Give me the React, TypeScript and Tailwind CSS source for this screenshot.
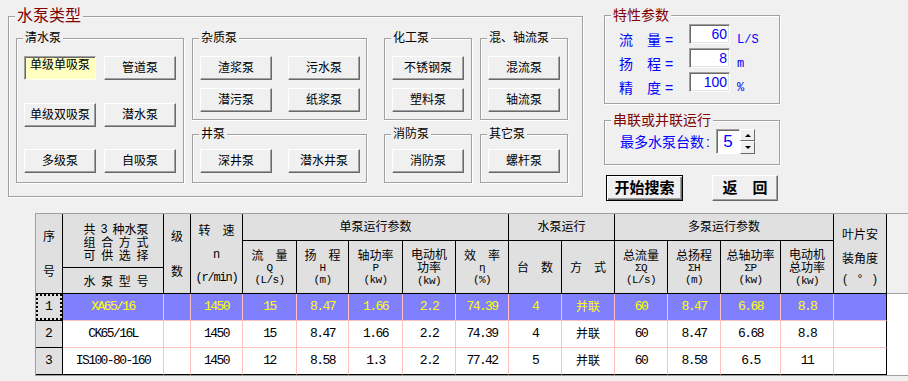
import React from "react";

const CJK = "font-['Liberation_Sans','Noto_Sans_CJK_SC',sans-serif]";
const MONO = "font-['Liberation_Mono','Noto_Sans_CJK_SC',monospace]";
const SUB = "-mt-[8px] ml-[6px] text-[12px] leading-[14px] text-black";
const RT = "-mt-[9px] ml-[6px] text-[14px] leading-[16px] text-[#800000]";

function Group({
  title,
  titleClass,
  className = "",
  children,
}: {
  title: string;
  titleClass: string;
  className?: string;
  children?: React.ReactNode;
}) {
  return (
    <div
      className={
        "border border-[#a0a0a0] shadow-[inset_1px_1px_0_#fff,1px_1px_0_#fff] " +
        className
      }
    >
      <div className={"w-fit whitespace-nowrap bg-[#f0f0f0] px-[2px] " + titleClass}>{title}</div>
      {children}
    </div>
  );
}

function Btn({ children, className = "" }: { children: React.ReactNode; className?: string }) {
  return (
    <div
      className={
        "flex h-[24px] w-[72px] items-center justify-center whitespace-nowrap border border-b-[#696969] border-l-white border-r-[#696969] border-t-white bg-[#f0f0f0] text-[12px] leading-[14px] text-black shadow-[inset_-1px_-1px_0_#a0a0a0] " +
        className
      }
    >
      {children}
    </div>
  );
}

function SelBtn({ children }: { children: React.ReactNode }) {
  return (
    <div className="flex h-[24px] w-[72px] justify-center whitespace-nowrap border border-b-white border-l-[#a0a0a0] border-r-white border-t-[#a0a0a0] bg-[#ffffc0] pt-[1px] text-[12px] leading-[14px] text-black shadow-[inset_1px_1px_0_#696969]">
      {children}
    </div>
  );
}

function ParamRow({ label, value, unit }: { label: string; value: string; unit: string }) {
  return (
    <div className="flex h-[20px] items-start">
      <div className="ml-[14px] mt-[8px] w-[70px] whitespace-nowrap text-[14px] leading-[16px] text-[#0000ff]">
        {label} =
      </div>
      <div className="flex h-[20px] w-[41px] items-center justify-end border border-b-white border-l-[#a0a0a0] border-r-white border-t-[#a0a0a0] bg-white pr-[2px] text-[14px] leading-[16px] text-[#0000ff] shadow-[inset_1px_1px_0_#696969,inset_-1px_-1px_0_#e3e3e3]">
        {value}
      </div>
      <div className={"ml-[7px] mt-[8px] text-[12px] leading-[16px] text-[#0000ff] " + MONO}>{unit}</div>
    </div>
  );
}

const HC =
  "flex flex-col items-center border-b border-r border-black bg-[#e0e0e0] text-[12px] text-black whitespace-nowrap";

function Tri({ label, sym, unit }: { label: string; sym: string; unit: string }) {
  return (
    <div className={HC + " row-span-2 justify-center pt-[1px]"}>
      <div className="leading-[12px]">{label}</div>
      <div className={"text-[11px] leading-[12px] tracking-[-0.6px] " + MONO}>{sym}</div>
      <div className={"text-[11px] leading-[12px] tracking-[-0.6px] " + MONO}>{unit}</div>
    </div>
  );
}

function Tri2({ a, b, unit }: { a: string; b: string; unit: string }) {
  return (
    <div className={HC + " row-span-2 justify-center pt-[1px]"}>
      <div className="leading-[13px]">{a}</div>
      <div className="leading-[13px]">{b}</div>
      <div className={"text-[11px] leading-[12px] tracking-[-0.6px] " + MONO}>{unit}</div>
    </div>
  );
}

const rows = [
  ["1", "XA65/16", "", "1450", "15", "8.47", "1.66", "2.2", "74.39", "4", "并联", "60", "8.47", "6.68", "8.8", ""],
  ["2", "CK65/16L", "", "1450", "15", "8.47", "1.66", "2.2", "74.39", "4", "并联", "60", "8.47", "6.68", "8.8", ""],
  ["3", "IS100-80-160", "", "1450", "12", "8.58", "1.3", "2.2", "77.42", "5", "并联", "60", "8.58", "6.5", "11", ""],
];

export default function App() {
  return (
    <div className={"flex h-[381px] w-[908px] flex-col overflow-hidden bg-[#f0f0f0] " + CJK}>
      {/* top section */}
      <div className="flex h-[213px] shrink-0 pl-[8px] pt-[16px]">
        <Group
          title="水泵类型"
          titleClass="-mt-[11px] ml-[6px] text-[16px] leading-[20px] text-[#800000]"
          className="h-[181px] w-[575px] shrink-0"
        >
          <div className="ml-[7px] mt-[12px] flex items-start">
            <Group title="清水泵" titleClass={SUB} className="h-[145px] w-[168px] shrink-0">
              <div className="ml-[7px] mt-[11px] grid grid-cols-[72px_72px] gap-x-[8px]">
                <SelBtn>单级单吸泵</SelBtn>
                <Btn>管道泵</Btn>
              </div>
              <div className="ml-[7px] mt-[23px] grid grid-cols-[72px_72px] gap-x-[8px]">
                <Btn>单级双吸泵</Btn>
                <Btn>潜水泵</Btn>
              </div>
              <div className="ml-[7px] mt-[22px] grid grid-cols-[72px_72px] gap-x-[8px]">
                <Btn>多级泵</Btn>
                <Btn>自吸泵</Btn>
              </div>
            </Group>
            <div className="ml-[8px] flex w-[175px] shrink-0 flex-col">
              <Group title="杂质泵" titleClass={SUB} className="h-[82px]">
                <div className="ml-[7px] mt-[11px] grid grid-cols-[72px_72px] gap-x-[16px] gap-y-[8px]">
                  <Btn>渣浆泵</Btn>
                  <Btn>污水泵</Btn>
                  <Btn>潜污泵</Btn>
                  <Btn>纸浆泵</Btn>
                </div>
              </Group>
              <Group title="井泵" titleClass={SUB} className="mt-[14px] h-[49px]">
                <div className="ml-[7px] mt-[8px] grid grid-cols-[72px_72px] gap-x-[16px]">
                  <Btn>深井泵</Btn>
                  <Btn>潜水井泵</Btn>
                </div>
              </Group>
            </div>
            <div className="ml-[17px] flex w-[88px] shrink-0 flex-col">
              <Group title="化工泵" titleClass={SUB} className="h-[82px]">
                <div className="ml-[7px] mt-[11px] flex flex-col gap-y-[8px]">
                  <Btn>不锈钢泵</Btn>
                  <Btn>塑料泵</Btn>
                </div>
              </Group>
              <Group title="消防泵" titleClass={SUB} className="mt-[14px] h-[49px]">
                <div className="ml-[7px] mt-[8px] flex">
                  <Btn>消防泵</Btn>
                </div>
              </Group>
            </div>
            <div className="ml-[8px] flex w-[88px] shrink-0 flex-col">
              <Group title="混、轴流泵" titleClass={SUB} className="h-[82px]">
                <div className="ml-[7px] mt-[11px] flex flex-col gap-y-[8px]">
                  <Btn>混流泵</Btn>
                  <Btn>轴流泵</Btn>
                </div>
              </Group>
              <Group title="其它泵" titleClass={SUB} className="mt-[14px] h-[49px]">
                <div className="ml-[7px] mt-[8px] flex">
                  <Btn>螺杆泵</Btn>
                </div>
              </Group>
            </div>
          </div>
        </Group>

        {/* right column */}
        <div className="-mt-[1px] ml-[21px] flex w-[176px] shrink-0 flex-col">
          <Group title="特性参数" titleClass={RT} className="h-[89px]">
            <div className="mt-[1px] flex flex-col gap-[4px]">
              <ParamRow label="流　量" value="60" unit="L/S" />
              <ParamRow label="扬　程" value="8" unit="m" />
              <ParamRow label="精　度" value="100" unit="%" />
            </div>
          </Group>
          <Group title="串联或并联运行" titleClass={RT} className="mt-[16px] h-[45px]">
            <div className="mt-[1px] flex h-[25px] items-center">
              <div className="ml-[15px] w-[96px] whitespace-nowrap text-[14px] leading-[16px] text-[#0000ff]">
                最多水泵台数<span className="ml-[2px]">:</span>
              </div>
              <div className="flex h-[25px] w-[24px] items-center justify-center border border-b-white border-l-[#a0a0a0] border-r-white border-t-[#a0a0a0] bg-white text-[17px] leading-[20px] text-[#0000ff] shadow-[inset_1px_1px_0_#696969]">
                5
              </div>
              <div className="flex w-[15px] flex-col">
                <div className="flex h-[12px] items-center justify-center border border-b-[#696969] border-l-white border-r-[#696969] border-t-white bg-[#f0f0f0]">
                  <div className="h-0 w-0 border-x-[3px] border-b-[3px] border-x-transparent border-b-black" />
                </div>
                <div className="flex h-[13px] items-center justify-center border border-b-[#696969] border-l-white border-r-[#696969] border-t-white bg-[#f0f0f0]">
                  <div className="h-0 w-0 border-x-[3px] border-t-[3px] border-x-transparent border-t-black" />
                </div>
              </div>
            </div>
          </Group>
          <div className="mt-[10px] flex">
            <div className="ml-[2px] flex h-[26px] w-[77px] items-center justify-center border border-black bg-[#f0f0f0] text-[15px] font-bold leading-[18px] text-black shadow-[inset_1px_1px_0_#fff,inset_-1px_-1px_0_#696969,inset_-2px_-2px_0_#a0a0a0]">
              开始搜索
            </div>
            <div className="ml-[29px] flex h-[26px] w-[66px] items-center justify-center border border-b-[#696969] border-l-white border-r-[#696969] border-t-white bg-[#f0f0f0] text-[15px] font-bold leading-[18px] text-black shadow-[inset_-1px_-1px_0_#a0a0a0]">
              返　回
            </div>
          </div>
        </div>
      </div>

      {/* grid */}
      <div className="ml-[35px] flex h-[163px] w-[873px] shrink-0 border-b border-l border-t border-[#a0a0a0] bg-white">
        <div className="grid w-[851px] shrink-0 grid-cols-[27px_101px_27px_52px_54px_52px_54px_53px_53px_53px_53px_53px_53px_60px_53px_53px] grid-rows-[27px_27px_26px_27px_27px_27px]">
          {/* header row 1 */}
          <div className={HC + " row-span-3"}>
            <div className="mt-[16px] leading-[14px]">序</div>
            <div className="mt-[21px] leading-[14px]">号</div>
          </div>
          <div className={HC + " row-span-2 pl-[6px] pt-[10px]"}>
            <div className="flex w-[65px] justify-between leading-[13px]">
              <span>共</span>
              <span className={MONO}>3</span>
              <span>种水泵</span>
            </div>
            <div className="flex w-[65px] justify-between leading-[13px]">
              <span>组</span>
              <span>合</span>
              <span>方</span>
              <span>式</span>
            </div>
            <div className="flex w-[65px] justify-between leading-[13px]">
              <span>可</span>
              <span>供</span>
              <span>选</span>
              <span>择</span>
            </div>
          </div>
          <div className={HC + " row-span-3"}>
            <div className="mt-[16px] leading-[14px]">级</div>
            <div className="mt-[21px] leading-[14px]">数</div>
          </div>
          <div className={HC + " row-span-3"}>
            <div className="mt-[10px] leading-[14px]">转　速</div>
            <div className={"mt-[10px] leading-[14px] " + MONO}>n</div>
            <div className={"mt-[9px] leading-[14px] tracking-[-1.2px] " + MONO}>(r/min)</div>
          </div>
          <div className={HC + " col-span-5 justify-center"}>
            <div className="leading-[14px]">单泵运行参数</div>
          </div>
          <div className={HC + " col-span-2 justify-center"}>
            <div className="leading-[14px]">水泵运行</div>
          </div>
          <div className={HC + " col-span-4 justify-center"}>
            <div className="leading-[14px]">多泵运行参数</div>
          </div>
          <div className={HC + " row-span-3 border-r-black"}>
            <div className="mt-[14px] leading-[14px]">叶片安</div>
            <div className="mt-[10px] leading-[14px]">装角度</div>
            <div className="mt-[6px] flex w-[34px] justify-between leading-[14px]">
              <span>(</span>
              <span>°</span>
              <span>)</span>
            </div>
          </div>
          {/* header row 2 */}
          <Tri label="流　量" sym="Q" unit="(L/s)" />
          <Tri label="扬　程" sym="H" unit="(m)" />
          <Tri label="轴功率" sym="P" unit="(kw)" />
          <Tri2 a="电动机" b="功率" unit="(kw)" />
          <Tri label="效　率" sym="η" unit="(%)" />
          <div className={HC + " row-span-2 justify-center pt-[2px]"}>
            <div className="leading-[14px]">台　数</div>
          </div>
          <div className={HC + " row-span-2 justify-center pt-[2px]"}>
            <div className="leading-[14px]">方　式</div>
          </div>
          <Tri label="总流量" sym="ΣQ" unit="(L/s)" />
          <Tri label="总扬程" sym="ΣH" unit="(m)" />
          <Tri label="总轴功率" sym="ΣP" unit="(kw)" />
          <Tri2 a="电动机" b="总功率" unit="(kw)" />
          {/* header row 3 */}
          <div className={HC + " justify-center pl-[6px] pt-[2px]"}>
            <div className="flex w-[65px] justify-between leading-[14px]">
              <span>水</span>
              <span>泵</span>
              <span>型</span>
              <span>号</span>
            </div>
          </div>

          {/* data rows */}
          {rows.map((r, ri) =>
            r.map((v, ci) => {
              const sel = ri === 0;
              const last = ri === 2;
              if (ci === 0) {
                return (
                  <div
                    key={ri + "-" + ci}
                    className="flex border-b border-r border-black bg-[#e0e0e0]"
                  >
                    <div
                      className={
                        "flex flex-1 items-center justify-center text-[13px] leading-[14px] text-black " +
                        MONO +
                        (sel ? " border-2 border-dotted border-black" : "")
                      }
                    >
                      {v}
                    </div>
                  </div>
                );
              }
              const isCjk = v === "并联";
              return (
                <div
                  key={ri + "-" + ci}
                  className={
                    "flex items-center justify-center whitespace-nowrap border-b border-r leading-[14px] " +
                    (last ? "border-b-black " : "border-b-[#ffc0c0] ") +
                    (ci === 15 ? "border-r-black " : "border-r-[#ffc0c0] ") +
                    (sel ? "bg-[#8080ff] text-[#ffff00] " : "bg-white text-black ") +
                    (isCjk ? "text-[12px]" : "text-[13px] tracking-[-1.6px] " + MONO)
                  }
                >
                  {v}
                </div>
              );
            })
          )}
        </div>
        <div className="flex flex-1 flex-col">
          <div className="h-[80px] border-b border-[#a0a0a0] bg-[#f0f0f0]" />
        </div>
      </div>
    </div>
  );
}
